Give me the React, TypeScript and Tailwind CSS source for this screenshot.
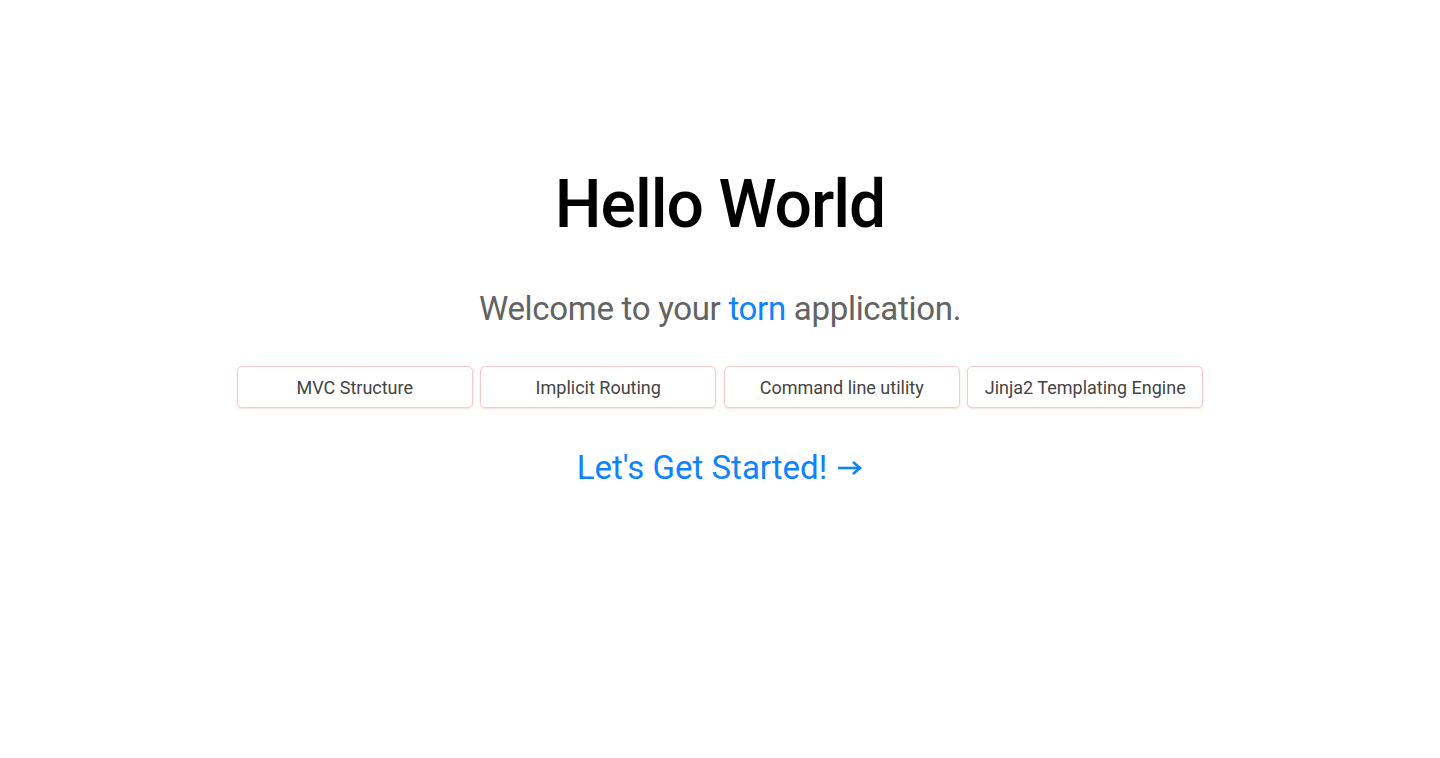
import React from "react";

const features = [
  "MVC Structure",
  "Implicit Routing",
  "Command line utility",
  "Jinja2 Templating Engine",
];

export default function App() {
  return (
    <div
      className="min-h-[758px] w-full bg-white flex flex-col items-center"
      style={{ fontFamily: "Roboto, 'Open Sans', sans-serif" }}
    >
      {/* TITULO */}
      <h1 className="mt-[162px] text-[66px] leading-[86px] font-medium text-black tracking-[-1px]">
        Hello World
      </h1>

      <p className="mt-[41px] text-[33px] leading-[40px] text-[#636363] tracking-[-0.3px]">
        Welcome to your <span className="text-[#0f83ff]">torn</span> application.
      </p>

      {/* FEATURES */}
      <div className="mt-[37px] flex gap-[7.5px]">
        {features.map((f) => (
          <div
            key={f}
            className="w-[236px] h-[42px] flex items-center justify-center rounded-[5px] border border-[#f9caca] shadow-[0_1px_2px_rgba(240,150,150,0.35)] text-[18px] text-[#444444]"
          >
            {f}
          </div>
        ))}
      </div>

      <a
        href="#"
        className="mt-[40px] text-[33px] leading-[40px] text-[#0f83ff] flex items-center gap-[10px]"
      >
        <span>Let's Get Started!</span>
        <svg width="26" height="16" viewBox="0 0 26 16" fill="none" stroke="#0f83ff" strokeWidth="2.6">
          <path d="M1 8h22" />
          <path d="M16 2l7 6-7 6" strokeLinejoin="miter" />
        </svg>
      </a>
    </div>
  );
}
